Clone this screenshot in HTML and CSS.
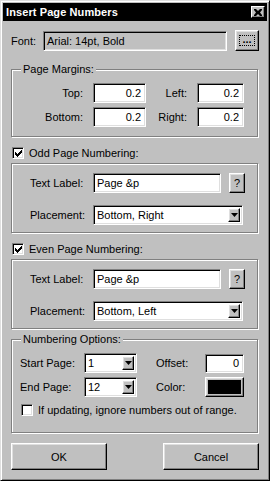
FILE: index.html
```html
<!DOCTYPE html>
<html>
<head>
<meta charset="utf-8">
<title>Insert Page Numbers</title>
<link rel="stylesheet" href="styles.css">
</head>
<body>
<div class="window">
  <div class="titlebar">
    <span class="title">Insert Page Numbers</span>
    <span class="close"><svg width="8" height="7" viewBox="0 0 8 7"><path d="M0 0h2l2 2 2-2h2v1L6 3.5 8 6v1H6L4 5 2 7H0V6l2-2.5L0 1z" fill="#000"/></svg></span>
  </div>
  <div class="content">
    <div class="font-row">
      <span class="font-label">Font:</span>
      <div class="field disabled">Arial: 14pt, Bold</div>
      <div class="btn browse"><span class="focus">...</span></div>
    </div>

    <div class="group margins">
      <div class="legend">Page Margins:</div>
      <div class="margin-grid">
        <span class="lbl">Top:</span><div class="field num">0.2</div>
        <span class="lbl">Left:</span><div class="field num">0.2</div>
        <span class="lbl">Bottom:</span><div class="field num">0.2</div>
        <span class="lbl">Right:</span><div class="field num">0.2</div>
      </div>
    </div>

    <div class="check-head">
      <span class="checkbox"><svg width="7" height="7" viewBox="0 0 7 7"><path d="M0 2h1v1h1v1h1V3h1V2h1V1h1V0h1v3H6v1H5v1H4v1H3v1H2V6H1V5H0z" fill="#000"/></svg></span>
      <span>Odd Page Numbering:</span>
    </div>
    <div class="box">
      <div class="row">
        <span class="rlbl">Text Label:</span>
        <div class="field text">Page &amp;p</div>
        <div class="btn help">?</div>
      </div>
      <div class="row">
        <span class="rlbl">Placement:</span>
        <div class="select wide"><span class="sv">Bottom, Right</span><span class="btn drop"><svg width="7" height="4" viewBox="0 0 7 4"><path d="M0 0h7L3.5 4z" fill="#000"/></svg></span></div>
      </div>
    </div>

    <div class="check-head">
      <span class="checkbox"><svg width="7" height="7" viewBox="0 0 7 7"><path d="M0 2h1v1h1v1h1V3h1V2h1V1h1V0h1v3H6v1H5v1H4v1H3v1H2V6H1V5H0z" fill="#000"/></svg></span>
      <span>Even Page Numbering:</span>
    </div>
    <div class="box">
      <div class="row">
        <span class="rlbl">Text Label:</span>
        <div class="field text">Page &amp;p</div>
        <div class="btn help">?</div>
      </div>
      <div class="row">
        <span class="rlbl">Placement:</span>
        <div class="select wide"><span class="sv">Bottom, Left</span><span class="btn drop"><svg width="7" height="4" viewBox="0 0 7 4"><path d="M0 0h7L3.5 4z" fill="#000"/></svg></span></div>
      </div>
    </div>

    <div class="group numbering">
      <div class="legend">Numbering Options:</div>
      <div class="num-grid">
        <span class="nlbl">Start Page:</span>
        <div class="select small"><span class="sv">1</span><span class="btn drop"><svg width="7" height="4" viewBox="0 0 7 4"><path d="M0 0h7L3.5 4z" fill="#000"/></svg></span></div>
        <span class="nlbl side">Offset:</span>
        <div class="field num offset">0</div>
        <span class="nlbl">End Page:</span>
        <div class="select small"><span class="sv">12</span><span class="btn drop"><svg width="7" height="4" viewBox="0 0 7 4"><path d="M0 0h7L3.5 4z" fill="#000"/></svg></span></div>
        <span class="nlbl side">Color:</span>
        <div class="swatch"><span class="swatch-fill"></span></div>
      </div>
      <div class="check-row">
        <span class="checkbox"></span>
        <span>If updating, ignore numbers out of range.</span>
      </div>
    </div>

    <div class="buttons">
      <div class="btn big">OK</div>
      <div class="btn big">Cancel</div>
    </div>
  </div>
</div>
</body>
</html>
```

FILE: styles.css
```css
html, body {
  margin: 0;
  padding: 0;
  background: #c0c0c0;
}
body {
  font-family: "Liberation Sans", Arial, sans-serif;
  font-size: 11px;
  color: #000;
}
.window {
  width: 270px;
  height: 481px;
  box-sizing: border-box;
  border: 1px solid;
  border-color: #dfdfdf #000 #000 #dfdfdf;
  box-shadow: inset 1px 1px #fff, inset -1px -1px #808080;
  padding: 2px;
  display: flex;
  flex-direction: column;
}
.titlebar {
  height: 18px;
  flex: none;
  background: #000;
  color: #fff;
  display: flex;
  align-items: center;
  justify-content: space-between;
  padding: 0 2px 0 3px;
}
.title {
  font-weight: bold;
  font-size: 11px;
  letter-spacing: 0.1px;
}
.close {
  width: 14px;
  height: 12px;
  box-sizing: border-box;
  background: #c0c0c0;
  border: 1px solid;
  border-color: #fff #000 #000 #fff;
  box-shadow: inset -1px -1px #808080;
  display: flex;
  align-items: center;
  justify-content: center;
}
.close svg { display: block; }
.content {
  flex: 1;
  display: flex;
  flex-direction: column;
  padding: 0 8px;
}
.field {
  box-sizing: border-box;
  height: 20px;
  background: #fff;
  border: 1px solid;
  border-color: #808080 #fff #fff #808080;
  box-shadow: inset 1px 1px #000, inset -1px -1px #dfdfdf;
  display: flex;
  align-items: center;
  padding: 0 3px;
  white-space: nowrap;
}
.field.disabled {
  background: #c0c0c0;
}
.field.num {
  justify-content: flex-end;
  padding-right: 4px;
}
.btn {
  box-sizing: border-box;
  background: #c0c0c0;
  border: 1px solid;
  border-color: #fff #000 #000 #fff;
  box-shadow: inset -1px -1px #808080, inset 1px 1px #dfdfdf;
  display: flex;
  align-items: center;
  justify-content: center;
}
/* font row */
.font-row {
  margin-top: 9px;
  height: 21px;
  display: flex;
  align-items: center;
}
.font-label {
  width: 32px;
  flex: none;
}
.font-row .field {
  width: 184px;
}
.browse {
  margin-left: 8px;
  width: 24px;
  height: 21px;
}
.browse .focus {
  border: 1px dotted #000;
  width: 16px;
  height: 11px;
  box-sizing: border-box;
  display: flex;
  align-items: center;
  justify-content: center;
  font-weight: bold;
  line-height: 1;
  padding-bottom: 3px;
}
/* groups */
.group, .box {
  box-sizing: border-box;
  border: 1px solid #808080;
  box-shadow: inset 1px 1px #fff, 1px 1px #fff;
  margin-right: 1px;
}
.legend {
  width: max-content;
  margin: -7px 0 0 9px;
  padding: 0 2px;
  line-height: 13px;
  background: #c0c0c0;
}
.margins {
  margin-top: 18px;
  height: 68px;
}
.margin-grid {
  margin-top: 7px;
  display: grid;
  grid-template-columns: 71px 53px 31px 47px;
  grid-auto-rows: 20px;
  column-gap: 10px;
  row-gap: 4px;
  align-items: center;
}
.margin-grid .lbl { text-align: right; }
/* check heads */
.check-head {
  margin-top: 8px;
  height: 16px;
  display: flex;
  align-items: center;
  padding-left: 1px;
  gap: 5px;
}
.checkbox {
  width: 12px;
  height: 12px;
  box-sizing: border-box;
  background: #fff;
  border: 1px solid;
  border-color: #808080 #fff #fff #808080;
  box-shadow: inset 1px 1px #000, inset -1px -1px #dfdfdf;
  display: flex;
  align-items: center;
  justify-content: center;
  flex: none;
}
.checkbox svg { display: block; }
.box {
  margin-top: 2px;
  height: 70px;
  padding: 9px 0 0 18px;
  display: flex;
  flex-direction: column;
  gap: 12px;
}
.row {
  height: 20px;
  display: flex;
  align-items: center;
}
.rlbl {
  width: 63px;
  flex: none;
}
.field.text {
  width: 128px;
}
.help {
  margin-left: 8px;
  width: 16px;
  height: 20px;
}
.select {
  box-sizing: border-box;
  height: 20px;
  background: #fff;
  border: 1px solid;
  border-color: #808080 #fff #fff #808080;
  box-shadow: inset 1px 1px #000, inset -1px -1px #dfdfdf;
  display: flex;
  align-items: stretch;
  padding: 2px;
}
.select .sv {
  flex: 1;
  display: flex;
  align-items: center;
  padding-left: 1px;
  white-space: nowrap;
}
.select.wide { width: 150px; }
.drop {
  width: 12px;
  flex: none;
}
.drop svg { display: block; }
/* numbering */
.numbering {
  margin-top: 10px;
  height: 94px;
}
.num-grid {
  margin-top: 7px;
  padding-left: 8px;
  display: grid;
  grid-template-columns: 64px 53px 68px 39px;
  grid-auto-rows: 20px;
  row-gap: 4px;
  align-items: center;
}
.nlbl.side {
  padding-left: 19px;
}
.select.small { width: 53px; }
.field.offset { height: 19px; }
.swatch {
  box-sizing: border-box;
  height: 20px;
  border: 1px solid;
  border-color: #fff #000 #000 #fff;
  box-shadow: inset -1px -1px #808080, inset 1px 1px #dfdfdf;
  padding: 2px;
  display: flex;
}
.swatch-fill {
  flex: 1;
  background: #000;
}
.check-row {
  margin-top: 7px;
  padding-left: 9px;
  display: flex;
  align-items: center;
  gap: 5px;
}
.buttons {
  margin-top: 10px;
  display: flex;
  justify-content: space-between;
}
.big {
  width: 96px;
  height: 27px;
}
```
